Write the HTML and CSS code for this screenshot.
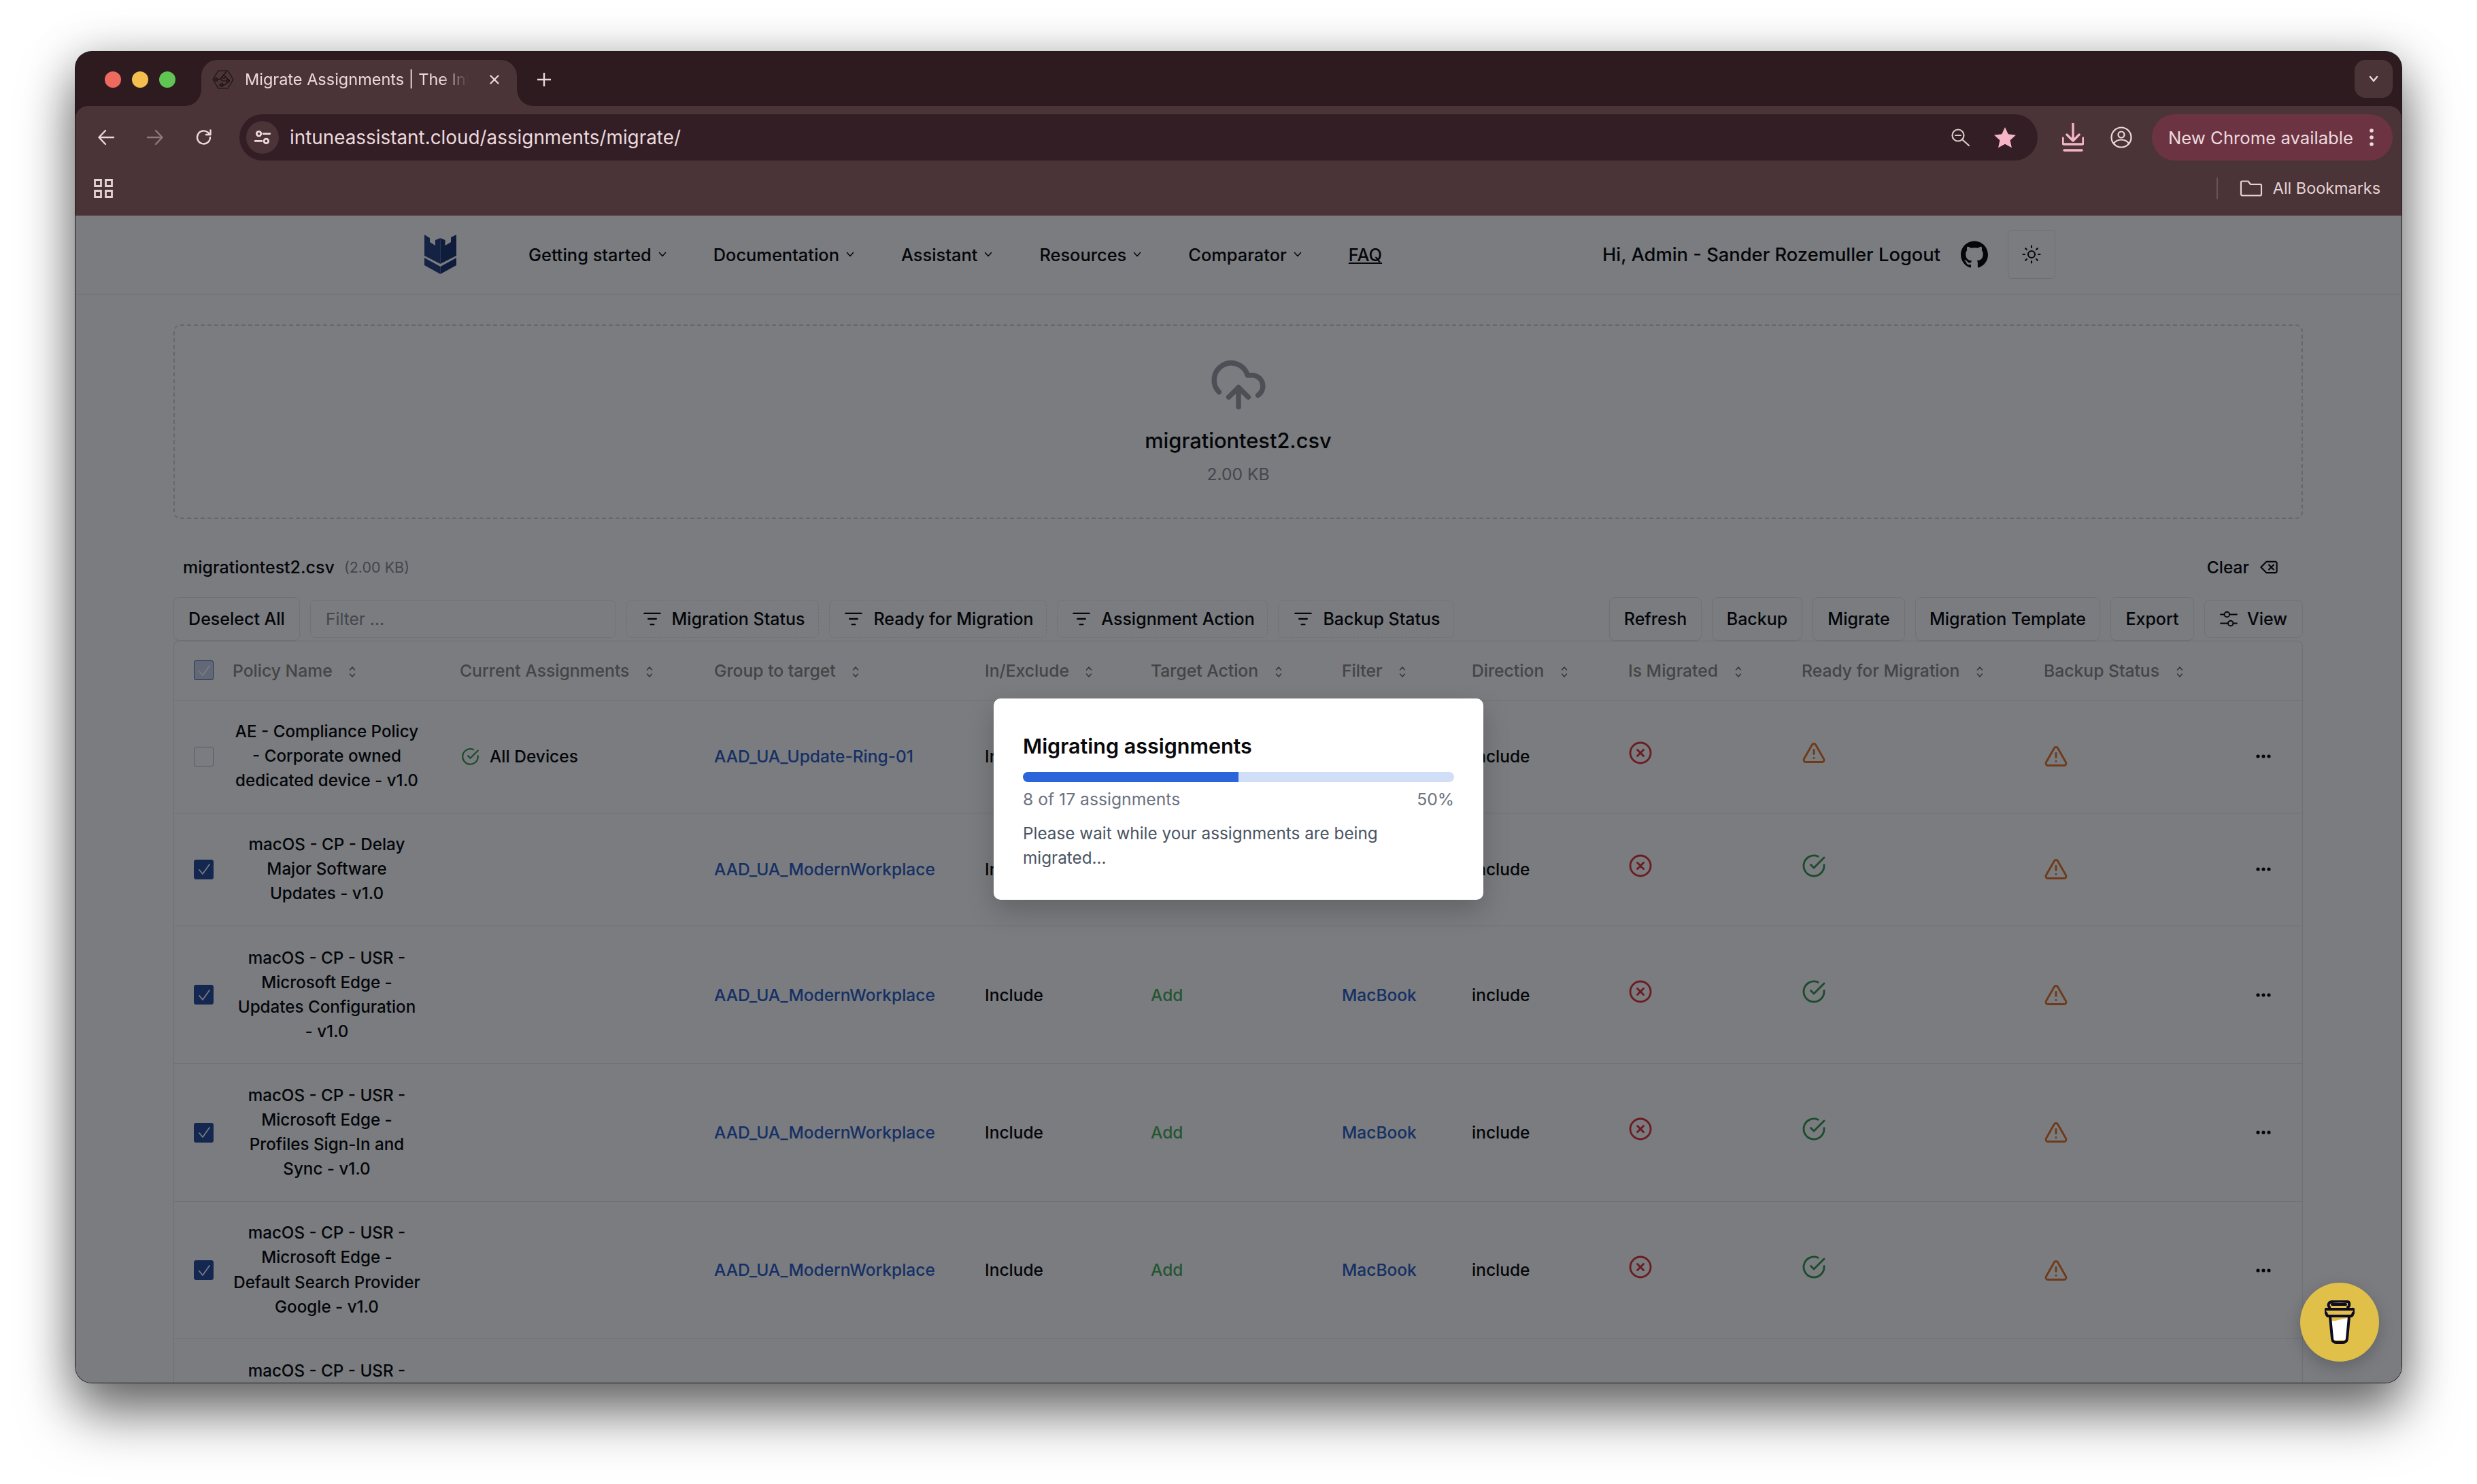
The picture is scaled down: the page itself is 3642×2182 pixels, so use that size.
FILE: index.html
```html
<!doctype html>
<html>
<head>
<meta charset="utf-8">
<title>Migrate Assignments | The Intune Assistant</title>
<link rel="stylesheet" href="styles.css">
</head>
<body>
<svg class="defs" width="0" height="0">
	<symbol id="i-updown" viewBox="0 0 12 18"><path d="M2.5 6 6 2l3.500 4M2.500 12 6 16l3.500-4"/></symbol>
	<symbol id="i-filter" viewBox="0 0 24 24"><path d="M2 5h20M7 12h10M10 19h4"/></symbol>
	<symbol id="i-check" viewBox="0 0 24 24"><path d="M22 11.080V12a10 10 0 1 1-5.930-9.140"/><path d="M22 4 12 14.010l-3-3"/></symbol>
	<symbol id="i-x" viewBox="0 0 24 24"><circle cx="12" cy="12" r="10"/><path d="m15 9-6 6M9 9l6 6"/></symbol>
	<symbol id="i-warn" viewBox="0 0 24 24"><path d="m21.730 18-8-14a2 2 0 0 0-3.480 0l-8 14A2 2 0 0 0 4 21h16a2 2 0 0 0 1.730-3Z"/><path d="M12 9v4M12 17h.01"/></symbol>
	<symbol id="i-dots" viewBox="0 0 24 8"><circle cx="4" cy="4" r="2.600"/><circle cx="12" cy="4" r="2.600"/><circle cx="20" cy="4" r="2.600"/></symbol>
	<symbol id="i-tick" viewBox="0 0 24 24"><path d="m5 13 5 6L20 5"/></symbol>
	<symbol id="i-chev" viewBox="0 0 12 8"><path d="m1.500 1.500 4.500 5 4.500-5"/></symbol>
</svg>

<div class="window">
	<div class="tabstrip">
		<div class="lights"><i class="red"></i><i class="amber"></i><i class="green"></i></div>
		<div class="tab">
			<svg class="favicon" viewBox="0 0 32 32"><path d="M9 3h14l8 13-8 13H9L1 16z"/><path d="M6 16l6-1 9-11M12 15l3 3M20 12l5 6h-9M10 24h8l4-3"/><circle cx="6" cy="16" r="2.200"/><circle cx="17" cy="12" r="2.200"/><circle cx="23" cy="18" r="2.200"/><circle cx="14" cy="24" r="2.200"/></svg>
			<span class="tab-title">Migrate Assignments | The Intune Assistant</span>
			<svg class="tab-close" viewBox="0 0 16 16"><path d="m2.500 2.500 11 11M13.500 2.500l-11 11"/></svg>
		</div>
		<svg class="tab-new" viewBox="0 0 20 20"><path d="M10 0v20M0 10h20"/></svg>
		<div class="tab-list"><svg viewBox="0 0 14 10"><path d="m2 2 5 6 5-6"/></svg></div>
	</div>

	<div class="toolbar">
		<svg class="tool" viewBox="0 0 28 28"><path d="M25 14H4M13 4 3.500 14l9.500 10"/></svg>
		<svg class="tool off" viewBox="0 0 28 28"><path d="M3 14h21M15 4l9.500 10L15 24"/></svg>
		<svg class="tool" viewBox="0 0 28 28"><path d="M23 14a9.500 9.500 0 1 1-3-7l3 3M23.500 3.500V10H17"/></svg>
		<div class="omnibox">
			<span class="site-chip"><svg viewBox="0 0 24 24"><circle cx="7" cy="7" r="3"/><path d="M13 7h9M2 17h9"/><circle cx="17" cy="17" r="3"/></svg></span>
			<span class="url">intuneassistant.cloud/assignments/migrate/</span>
			<svg class="omni-zoom" viewBox="0 0 28 28"><circle cx="11" cy="11" r="8.500"/><path d="M7 11h8M17 17l10 9"/></svg>
			<svg class="omni-star" viewBox="0 0 32 32"><path d="m16 1 4.700 10.300 11.300 1.300-8.400 7.600 2.300 11.100L16 25.700 6.100 31.300l2.300-11.100L0 12.600l11.300-1.300z"/></svg>
		</div>
		<svg class="tb-download" viewBox="0 0 32 42"><path d="M16 0v26M7 17l9 9 9-9M1 22v7a2 2 0 0 0 2 2h26a2 2 0 0 0 2-2v-7M3 40h26"/></svg>
		<svg class="tb-profile" viewBox="0 0 32 32"><circle cx="16" cy="16" r="14.500"/><circle cx="16" cy="12" r="4.500"/><path d="M5 25c3-5 7-5.500 11-5.500S24 20 27 25"/></svg>
		<div class="update">
			<span>New Chrome available</span>
			<svg viewBox="0 0 6 26"><circle cx="3" cy="3" r="2.800"/><circle cx="3" cy="13" r="2.800"/><circle cx="3" cy="23" r="2.800"/></svg>
		</div>
	</div>

	<div class="bookmarks">
		<svg class="apps" viewBox="0 0 28 28"><path d="M1.500 1.500h9v9h-9zM17.500 1.500h9v9h-9zM1.500 17.500h9v9h-9zM17.500 17.500h9v9h-9z"/></svg>
		<i class="bm-sep"></i>
		<svg class="bm-folder" viewBox="0 0 34 24"><path d="M2 3a1.500 1.500 0 0 1 1.500-1.500h9L16 6h14.500A1.500 1.500 0 0 1 32 7.500v13a2 2 0 0 1-2 2H4a2 2 0 0 1-2-2z"/></svg>
		<span class="bm-label">All Bookmarks</span>
	</div>

	<div class="viewport">
		<header class="site-head">
			<svg class="logo" viewBox="0 0 47 58">
				<path class="logo-l" d="M0 0l8 5v6l8 5V8l7.500-3V43L0 31zM0 34l23.500 13v11L0 45z"/>
				<path class="logo-r" d="M47 0l-8 4v7l-8.500 5V8l-7-3V43L47 31zM47 34 23.500 47v11L47 45z"/>
			</svg>
			<nav class="site-nav">
				<a>Getting started <svg><use href="#i-chev"/></svg></a>
				<a>Documentation <svg><use href="#i-chev"/></svg></a>
				<a>Assistant <svg><use href="#i-chev"/></svg></a>
				<a>Resources <svg><use href="#i-chev"/></svg></a>
				<a>Comparator <svg><use href="#i-chev"/></svg></a>
				<a class="faq">FAQ</a>
			</nav>
			<div class="account">
				<span class="hello">Hi, Admin - Sander Rozemuller Logout</span>
				<svg class="github" viewBox="0 0 24 24"><path d="M12 .297c-6.630 0-12 5.373-12 12 0 5.303 3.438 9.800 8.205 11.385.6.113.82-.258.82-.577 0-.285-.01-1.040-.015-2.040-3.338.724-4.042-1.610-4.042-1.610C4.422 18.070 3.633 17.700 3.633 17.700c-1.087-.744.084-.729.084-.729 1.205.084 1.838 1.236 1.838 1.236 1.070 1.835 2.809 1.305 3.495.998.108-.776.417-1.305.76-1.605-2.665-.3-5.466-1.332-5.466-5.930 0-1.310.465-2.380 1.235-3.220-.135-.303-.54-1.523.105-3.176 0 0 1.005-.322 3.300 1.230.96-.267 1.980-.399 3-.405 1.020.006 2.040.138 3 .405 2.280-1.552 3.285-1.230 3.285-1.230.645 1.653.24 2.873.12 3.176.765.84 1.230 1.910 1.230 3.220 0 4.610-2.805 5.625-5.475 5.920.42.36.81 1.096.81 2.220 0 1.606-.015 2.896-.015 3.286 0 .315.21.69.825.57C20.565 22.092 24 17.592 24 12.297c0-6.627-5.373-12-12-12"/></svg>
				<div class="theme-btn"><svg viewBox="0 0 24 24"><circle cx="12" cy="12" r="4"/><path d="M12 2v2M12 20v2M4.930 4.930l1.410 1.410M17.660 17.660l1.410 1.410M2 12h2M20 12h2M6.340 17.660l-1.410 1.410M19.070 4.930l-1.410 1.410"/></svg></div>
			</div>
		</header>

		<main class="content">
			<section class="dropzone">
				<svg class="cloud" viewBox="0 0 24 24"><path d="M12 13v8M4 14.899A7 7 0 1 1 15.710 8h1.790a4.500 4.500 0 0 1 2.500 8.242M8 17l4-4 4 4"/></svg>
				<div class="dz-name">migrationtest2.csv</div>
				<div class="dz-size">2.00 KB</div>
			</section>

			<div class="file-row">
				<span class="file-name">migrationtest2.csv</span>
				<span class="file-size">(2.00 KB)</span>
				<span class="clear">Clear <svg viewBox="0 0 24 24"><path d="M20 5H9l-7 7 7 7h11a2 2 0 0 0 2-2V7a2 2 0 0 0-2-2ZM18 9l-6 6M12 9l6 6"/></svg></span>
			</div>

			<div class="tools">
				<button class="btn deselect">Deselect All</button>
				<div class="filter-input">Filter ...</div>
				<button class="chip c-status"><svg><use href="#i-filter"/></svg>Migration Status</button>
				<button class="chip c-ready"><svg><use href="#i-filter"/></svg>Ready for Migration</button>
				<button class="chip c-action"><svg><use href="#i-filter"/></svg>Assignment Action</button>
				<button class="chip c-backup"><svg><use href="#i-filter"/></svg>Backup Status</button>
				<button class="btn w-refresh">Refresh</button>
				<button class="btn w-backup">Backup</button>
				<button class="btn w-migrate">Migrate</button>
				<button class="btn w-template">Migration Template</button>
				<button class="btn w-export">Export</button>
				<button class="btn view"><svg viewBox="0 0 24 24"><path d="M1 6h5M13 6h10M1 18h10M18 18h5"/><circle cx="9.500" cy="6" r="3.500"/><circle cx="14.500" cy="18" r="3.500"/></svg>View</button>
			</div>

			<table class="grid">
				<colgroup>
					<col class="c0"><col class="c1"><col class="c2"><col class="c3"><col class="c4"><col class="c5"><col class="c6"><col class="c7"><col class="c8"><col class="c9"><col class="c10"><col class="c11">
				</colgroup>
				<thead>
					<tr>
						<th><span class="box head-box"><svg><use href="#i-tick"/></svg></span></th>
						<th>Policy Name <svg class="sort"><use href="#i-updown"/></svg></th>
						<th>Current Assignments <svg class="sort"><use href="#i-updown"/></svg></th>
						<th>Group to target <svg class="sort"><use href="#i-updown"/></svg></th>
						<th>In/Exclude <svg class="sort"><use href="#i-updown"/></svg></th>
						<th>Target Action <svg class="sort"><use href="#i-updown"/></svg></th>
						<th>Filter <svg class="sort"><use href="#i-updown"/></svg></th>
						<th>Direction <svg class="sort"><use href="#i-updown"/></svg></th>
						<th>Is Migrated <svg class="sort"><use href="#i-updown"/></svg></th>
						<th>Ready for Migration <svg class="sort"><use href="#i-updown"/></svg></th>
						<th>Backup Status <svg class="sort"><use href="#i-updown"/></svg></th>
						<th></th>
					</tr>
				</thead>
				<tbody>
					<tr>
						<td><span class="box"></span></td>
						<td class="policy">AE - Compliance Policy<br>- Corporate owned<br>dedicated device - v1.0</td>
						<td><span class="assigned"><svg class="ico ok"><use href="#i-check"/></svg>All Devices</span></td>
						<td><a class="link">AAD_UA_Update-Ring-01</a></td>
						<td>Include</td><td class="add"></td><td></td><td>include</td>
						<td><svg class="ico bad up"><use href="#i-x"/></svg></td>
						<td><svg class="ico warn up"><use href="#i-warn"/></svg></td>
						<td><svg class="ico warn"><use href="#i-warn"/></svg></td>
						<td class="more"><svg><use href="#i-dots"/></svg></td>
					</tr>
					<tr>
						<td><span class="box on"><svg><use href="#i-tick"/></svg></span></td>
						<td class="policy">macOS - CP - Delay<br>Major Software<br>Updates - v1.0</td>
						<td></td>
						<td><a class="link">AAD_UA_ModernWorkplace</a></td>
						<td>Include</td><td class="add"></td><td></td><td>include</td>
						<td><svg class="ico bad up"><use href="#i-x"/></svg></td>
						<td><svg class="ico ok up"><use href="#i-check"/></svg></td>
						<td><svg class="ico warn"><use href="#i-warn"/></svg></td>
						<td class="more"><svg><use href="#i-dots"/></svg></td>
					</tr>
					<tr>
						<td><span class="box on"><svg><use href="#i-tick"/></svg></span></td>
						<td class="policy">macOS - CP - USR -<br>Microsoft Edge -<br>Updates Configuration<br>- v1.0</td>
						<td></td>
						<td><a class="link">AAD_UA_ModernWorkplace</a></td>
						<td>Include</td><td class="add">Add</td><td><a class="link">MacBook</a></td><td>include</td>
						<td><svg class="ico bad up"><use href="#i-x"/></svg></td>
						<td><svg class="ico ok up"><use href="#i-check"/></svg></td>
						<td><svg class="ico warn"><use href="#i-warn"/></svg></td>
						<td class="more"><svg><use href="#i-dots"/></svg></td>
					</tr>
					<tr>
						<td><span class="box on"><svg><use href="#i-tick"/></svg></span></td>
						<td class="policy">macOS - CP - USR -<br>Microsoft Edge -<br>Profiles Sign-In and<br>Sync - v1.0</td>
						<td></td>
						<td><a class="link">AAD_UA_ModernWorkplace</a></td>
						<td>Include</td><td class="add">Add</td><td><a class="link">MacBook</a></td><td>include</td>
						<td><svg class="ico bad up"><use href="#i-x"/></svg></td>
						<td><svg class="ico ok up"><use href="#i-check"/></svg></td>
						<td><svg class="ico warn"><use href="#i-warn"/></svg></td>
						<td class="more"><svg><use href="#i-dots"/></svg></td>
					</tr>
					<tr>
						<td><span class="box on"><svg><use href="#i-tick"/></svg></span></td>
						<td class="policy">macOS - CP - USR -<br>Microsoft Edge -<br>Default Search Provider<br>Google - v1.0</td>
						<td></td>
						<td><a class="link">AAD_UA_ModernWorkplace</a></td>
						<td>Include</td><td class="add">Add</td><td><a class="link">MacBook</a></td><td>include</td>
						<td><svg class="ico bad up"><use href="#i-x"/></svg></td>
						<td><svg class="ico ok up"><use href="#i-check"/></svg></td>
						<td><svg class="ico warn"><use href="#i-warn"/></svg></td>
						<td class="more"><svg><use href="#i-dots"/></svg></td>
					</tr>
					<tr>
						<td></td>
						<td class="policy">macOS - CP - USR -</td>
						<td></td><td></td><td></td><td></td><td></td><td></td><td></td><td></td><td></td><td></td>
					</tr>
				</tbody>
			</table>
		</main>

		<div class="overlay">
			<div class="modal">
				<h2>Migrating assignments</h2>
				<div class="bar"><div class="bar-fill" style="width:50%"></div></div>
				<div class="bar-info"><span>8 of 17 assignments</span><span>50%</span></div>
				<p>Please wait while your assignments are being migrated...</p>
			</div>
		</div>

		<a class="coffee">
			<svg viewBox="0 0 44 64">
				<path class="cup-milk" d="M10 30c9 1 17-4 25-4l-3 32H13z"/>
				<path class="cup-line" d="M8 24l3 32c.3 4 3 6 6 6h10c3 0 5.700-2 6-6l3-32M4 13h36a2.500 2.500 0 0 1 2 5.500l-1 2.500c-.5 1.500-1 2-3 2H6c-2 0-2.500-.5-3-2l-1-2.500A2.500 2.500 0 0 1 4 13ZM7 10c-3-3-1-7 3-8 7-1 17-1 24 0 3 .5 3 7 0 8M11 6h20"/>
			</svg>
		</a>
	</div>
</div>
</body>
</html>
```

FILE: styles.css
```css
*{margin:0;padding:0;box-sizing:border-box;}
html,body{height:2182px;overflow:hidden;background:#fff;}
body{font-family:"Inter","Noto Sans",sans-serif;font-size:24.500px;color:#09090b;}
.defs{position:absolute;}
svg{fill:none;stroke:currentColor;stroke-linecap:round;stroke-linejoin:round;display:block;flex:none;}

.window{width:3420px;height:1957px;margin:76px 0 0 111px;background:#2e1b1f;border-radius:24px;overflow:hidden;display:flex;flex-direction:column;box-shadow:0 0 0 1px #1c1c1e,0 46px 80px rgba(0,0,0,.5),0 10px 70px rgba(0,0,0,.28);}

/* chrome */
.tabstrip{height:80px;flex:none;display:flex;align-items:flex-start;padding-left:43px;color:#ecd9de;}
.lights{display:flex;gap:16px;margin-top:29px;}
.lights i{width:24px;height:24px;border-radius:50%;}
.red{background:#ee6a5f;}
.amber{background:#f5bf4f;}
.green{background:#61c554;}
.tab{position:relative;width:464px;height:68px;margin:12px 0 0 38px;background:#4b3437;border-radius:24px 24px 0 0;display:flex;align-items:center;padding:0 0 11px 16px;}
.tab:before,.tab:after{content:"";position:absolute;bottom:0;width:24px;height:24px;}
.tab:before{left:-24px;background:radial-gradient(circle at 0 0,transparent 23.500px,#4b3437 24px);}
.tab:after{right:-24px;background:radial-gradient(circle at 100% 0,transparent 23.500px,#4b3437 24px);}
.favicon{width:32px;height:32px;stroke:#1c1012;stroke-width:1.200;}
.tab-title{width:335px;margin-left:16px;white-space:nowrap;overflow:hidden;font-size:23.500px;-webkit-mask-image:linear-gradient(90deg,#000 86%,transparent 98%);mask-image:linear-gradient(90deg,#000 86%,transparent 98%);}
.tab-close{width:16px;height:16px;margin-left:24px;stroke-width:2.200;}
.tab-new{width:20px;height:20px;margin:31px 0 0 30px;stroke-width:2.400;}
.tab-list{width:56px;height:56px;margin:12px 13px 0 auto;background:#4b3437;border-radius:16px;display:flex;align-items:center;justify-content:center;}
.tab-list svg{width:14px;height:10px;stroke-width:2.400;}

.toolbar{height:92px;flex:none;background:#4b3437;border-radius:18px 18px 0 0;display:flex;align-items:center;padding:0 13px 0 23px;color:#ecd9de;}
.tool{width:44px;height:28px;margin-right:28px;stroke-width:2.400;}
.tool.off{opacity:.42;}
.toolbar .tool:nth-child(3){margin-right:30px;}
.omnibox{width:2644px;height:68px;background:#321e24;border-radius:34px;display:flex;align-items:center;padding:0 32px 0 10px;}
.site-chip{width:48px;height:48px;border-radius:50%;background:#4b3437;display:flex;align-items:center;justify-content:center;}
.site-chip svg{width:26px;height:26px;stroke-width:2.600;}
.url{margin-left:16px;font-size:27.850px;flex:1;white-space:nowrap;}
.omni-zoom{width:28px;height:28px;stroke-width:2.200;color:#d9c8cb;margin-right:36px;}
.omni-star{width:32px;height:32px;fill:#f6b5c6;stroke:none;}
.tb-download{width:32px;height:42px;margin-left:36px;color:#f6b5c6;stroke-width:3.400;}
.tb-profile{width:32px;height:32px;margin-left:39px;stroke-width:2.200;}
.update{width:354px;height:68px;margin-left:29px;background:#6c3442;border-radius:34px;display:flex;align-items:center;padding:0 28px 0 24px;font-size:25.700px;justify-content:space-between;white-space:nowrap;}
.update svg{width:6px;height:26px;fill:currentColor;stroke:none;}

.bookmarks{height:69px;flex:none;background:#4b3437;display:flex;align-items:center;padding:0 31px 12px 27px;color:#e4d2d6;}
.apps{width:28px;height:28px;stroke-width:2.800;stroke-linecap:butt;stroke-linejoin:miter;}
.bm-sep{width:2px;height:32px;margin-left:auto;background:#6a5256;}
.bm-folder{width:34px;height:24px;margin-left:32px;stroke-width:2.200;}
.bm-label{margin-left:15px;font-size:23.400px;}

/* page */
.viewport{position:relative;flex:1;background:#fff;overflow:hidden;}
.site-head{height:115.500px;border-bottom:1.500px solid #e7e7e2;display:flex;align-items:center;padding:0 509px 0 513px;}
.logo{width:47px;height:58px;stroke:none;}
.logo-l{fill:#2b4482;stroke:none;}
.logo-r{fill:#223772;stroke:none;}
.site-nav{display:flex;gap:69px;margin-left:106px;align-items:center;font-weight:500;font-size:25.400px;}
.site-nav a{display:flex;align-items:center;gap:10px;white-space:nowrap;}
.site-nav svg{width:12px;height:8px;stroke-width:1.500;}
.faq{text-decoration:underline;}
.account{margin-left:auto;display:flex;align-items:center;}
.hello{font-weight:500;font-size:27.300px;white-space:nowrap;}
.github{width:40px;height:40px;margin-left:30px;fill:#09090b;stroke:none;}
.theme-btn{width:70px;height:72px;margin-left:29px;border:1.500px solid #e4e4e7;border-radius:6px;display:flex;align-items:center;justify-content:center;}
.theme-btn svg{width:30px;height:30px;stroke-width:1.700;}

.content{padding:44px 145px 0 144px;}
.dropzone{height:286px;border:2.500px dashed #d4d4d8;border-radius:10px;display:flex;flex-direction:column;align-items:center;padding-top:44px;}
.cloud{width:86px;height:86px;color:#a1a1aa;stroke-width:2.100;}
.dz-name{margin-top:17px;font-size:30.800px;font-weight:500;line-height:44px;}
.dz-size{margin-top:9px;color:#8e8e96;line-height:36px;font-size:24.600px;}
.file-row{height:115px;padding:28px 36px 0 14px;display:flex;align-items:center;font-size:25px;}
.file-name{font-weight:500;}
.file-size{margin-left:14px;font-size:21.500px;color:#8e8e96;}
.clear{margin-left:auto;display:flex;align-items:center;gap:15px;font-weight:500;font-size:24.500px;}
.clear svg{width:28px;height:28px;stroke-width:1.800;}

.tools{display:flex;align-items:center;height:64px;gap:15px;font-weight:500;font-size:25px;}
button{font:inherit;color:inherit;background:none;white-space:nowrap;}
.btn{height:64px;border:1.500px solid #e8e8eb;border-radius:8px;box-shadow:0 1px 2px rgba(0,0,0,.04);padding:0;}
.deselect{width:186px;}
.filter-input{width:450px;height:56px;border:1.500px solid #e8e8eb;border-radius:8px;padding-left:22px;color:#8e8e96;font-weight:400;display:flex;align-items:center;font-size:24.500px;}
.chip{height:56px;border:1.500px dashed #e4e4e7;border-radius:8px;display:flex;align-items:center;justify-content:center;gap:15px;padding-left:3px;}
.chip svg{width:28px;height:28px;stroke-width:2;}
.c-status{width:283px;}
.c-ready{width:320px;}
.c-action{width:310px;}
.c-backup{width:259px;}
.w-refresh{width:136px;margin-left:auto;}
.w-backup{width:133px;}
.w-migrate{width:136px;}
.w-template{width:272px;}
.w-export{width:123px;}
.view{width:145px;height:56px;box-shadow:none;display:flex;align-items:center;justify-content:center;gap:14px;}
.view svg{width:26px;height:26px;stroke-width:1.700;}

.grid{width:3131px;border:1.500px solid #e4e4e7;border-bottom:0;border-collapse:separate;border-spacing:0;table-layout:fixed;border-radius:8px 8px 0 0;}
.c0{width:86px;}.c1{width:334px;}.c2{width:374px;}.c3{width:398px;}.c4{width:244px;}.c5{width:281px;}
.c6{width:191px;}.c7{width:230px;}.c8{width:255px;}.c9{width:356px;}.c10{width:285px;}.c11{width:95px;}
.grid th{height:87px;text-align:left;font-weight:500;font-size:24.700px;color:#8e8a88;border-bottom:1.500px solid #e4e4e7;white-space:nowrap;}
.grid th:first-child,.grid td:first-child{padding-left:29px;}
.sort{display:inline-block;width:12px;height:18px;margin-left:17px;vertical-align:-2px;stroke-width:1.500;color:#6f6c6a;}
.grid td{padding:28.500px 0;line-height:36.100px;font-weight:500;border-bottom:1.500px solid #e4e4e7;white-space:nowrap;}
.grid td.policy{padding-right:57px;text-align:center;font-size:24.200px;}
.box{display:flex;align-items:center;justify-content:center;width:29px;height:29px;border:1.500px solid #a8bbdc;border-radius:3px;}
.box svg{width:24px;height:24px;stroke-width:1.300;}
.box.on{background:#2b4f9e;border-color:#2b4f9e;color:#fff;}
.box.on svg{stroke-width:1.700;}
.head-box{background:#ccd6ea;border-color:#4a6db0;color:#fff;}
.head-box svg{stroke-width:1.700;}
.link{color:#2f60c8;}
.add{color:#4caf60;}
.ico{width:36px;height:36px;stroke-width:1.900;}
.ok{color:#3d9a55;}
.bad{color:#e0383e;}
.warn{color:#e8752a;}
.up{margin-bottom:10px;}
.assigned{display:flex;align-items:center;gap:15px;margin-left:2px;}
.assigned .ico{width:27px;height:27px;stroke-width:2;}
.more svg{width:24px;height:8px;margin-left:26px;fill:currentColor;stroke:none;}

/* dim + dialog */
.overlay{position:absolute;inset:0;background:rgba(0,3,9,.52);display:flex;align-items:center;justify-content:center;}
.modal{width:720px;height:296px;background:#fff;border-radius:10px;padding:43px;box-shadow:0 16px 40px rgba(0,0,0,.2);}
.modal h2{font-size:30.500px;font-weight:600;line-height:54px;margin-top:0;}
.bar{height:15px;margin-top:11px;background:#d0dff7;border-radius:8px;overflow:hidden;}
.bar-fill{height:100%;background:#2b65d9;}
.bar-info{display:flex;justify-content:space-between;margin-top:6px;line-height:38px;color:#6b7280;font-size:24.700px;}
.modal p{margin-top:13px;line-height:36px;color:#4b5563;font-size:24.300px;}

.coffee{position:absolute;right:33px;bottom:31px;width:116px;height:116px;border-radius:50%;background:#e1c04a;display:flex;align-items:center;justify-content:center;box-shadow:0 8px 24px rgba(0,0,0,.2);}
.coffee svg{width:44px;height:64px;}
.cup-milk{fill:#fff;stroke:none;}
.cup-line{stroke:#0d0c22;stroke-width:4;}
```
